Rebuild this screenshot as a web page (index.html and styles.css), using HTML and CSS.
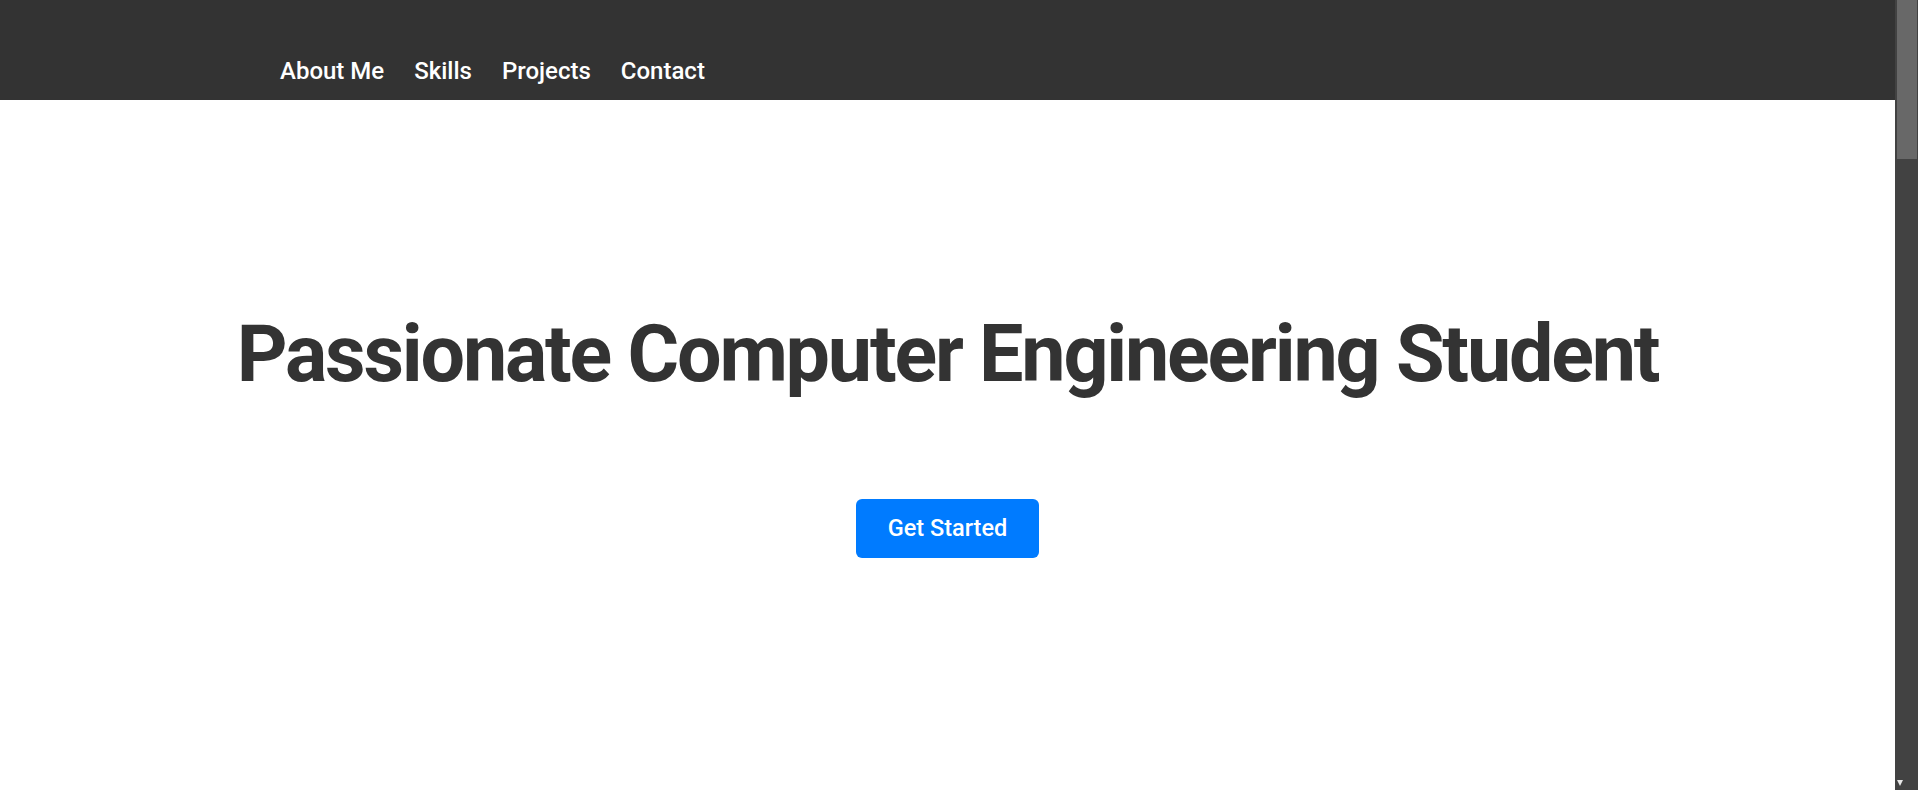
FILE: index.html
```html
<!DOCTYPE html>
<html lang="en">
<head>
<meta charset="utf-8">
<title>Portfolio</title>
<link rel="stylesheet" href="styles.css">
</head>
<body>
<div class="app">
  <div class="page">
    <header class="site-header">
      <nav class="main-nav">
        <a href="#about">About Me</a>
        <a href="#skills">Skills</a>
        <a href="#projects">Projects</a>
        <a href="#contact">Contact</a>
      </nav>
    </header>
    <section class="hero">
      <h1 class="hero-title">Passionate Computer Engineering Student</h1>
      <a class="btn" href="#about">Get Started</a>
    </section>
  </div>
  <div class="scrollbar" aria-hidden="true">
    <div class="scroll-thumb"></div>
    <div class="scroll-arrow"></div>
  </div>
</div>
</body>
</html>
```
FILE: styles.css
```css
html, body {
  margin: 0;
  height: 100%;
  overflow: hidden;
}
body {
  font-family: Roboto, "Liberation Sans", Arial, sans-serif;
  color: #333;
  background: #fff;
}
.app {
  display: flex;
  height: 100vh;
}
.page {
  flex: 1;
  min-width: 0;
  display: flex;
  flex-direction: column;
}
.site-header {
  background: #333;
  height: 100px;
  box-sizing: border-box;
  padding: 57px 0 0 280px;
  flex-shrink: 0;
}
.main-nav {
  display: flex;
  gap: 30px;
}
.main-nav a {
  color: #fff;
  text-decoration: none;
  font-size: 24px;
  font-weight: 500;
  line-height: 28px;
}
.hero {
  flex: 1;
  display: flex;
  flex-direction: column;
  align-items: center;
  text-align: center;
  padding: 208px 20px 0;
}
.hero-title {
  margin: 0 0 98px;
  font-size: 79px;
  font-weight: 700;
  line-height: 93px;
  letter-spacing: -2.2px;
  color: #333;
}
.btn {
  display: inline-block;
  background: #007bff;
  color: #fff;
  text-decoration: none;
  font-size: 23.5px;
  font-weight: 500;
  line-height: 27px;
  padding: 16px 31.5px;
  border-radius: 6px;
}
.scrollbar {
  width: 23px;
  flex-shrink: 0;
  background: #424242;
  box-sizing: border-box;
  padding: 0 1px 4px 2px;
  display: flex;
  flex-direction: column;
  justify-content: space-between;
}
.scroll-thumb {
  height: 159px;
  background: #686868;
}
.scroll-arrow {
  width: 0;
  height: 0;
  border-left: 3.5px solid transparent;
  border-right: 3.5px solid transparent;
  border-top: 6px solid #e8e8e8;
}
```
